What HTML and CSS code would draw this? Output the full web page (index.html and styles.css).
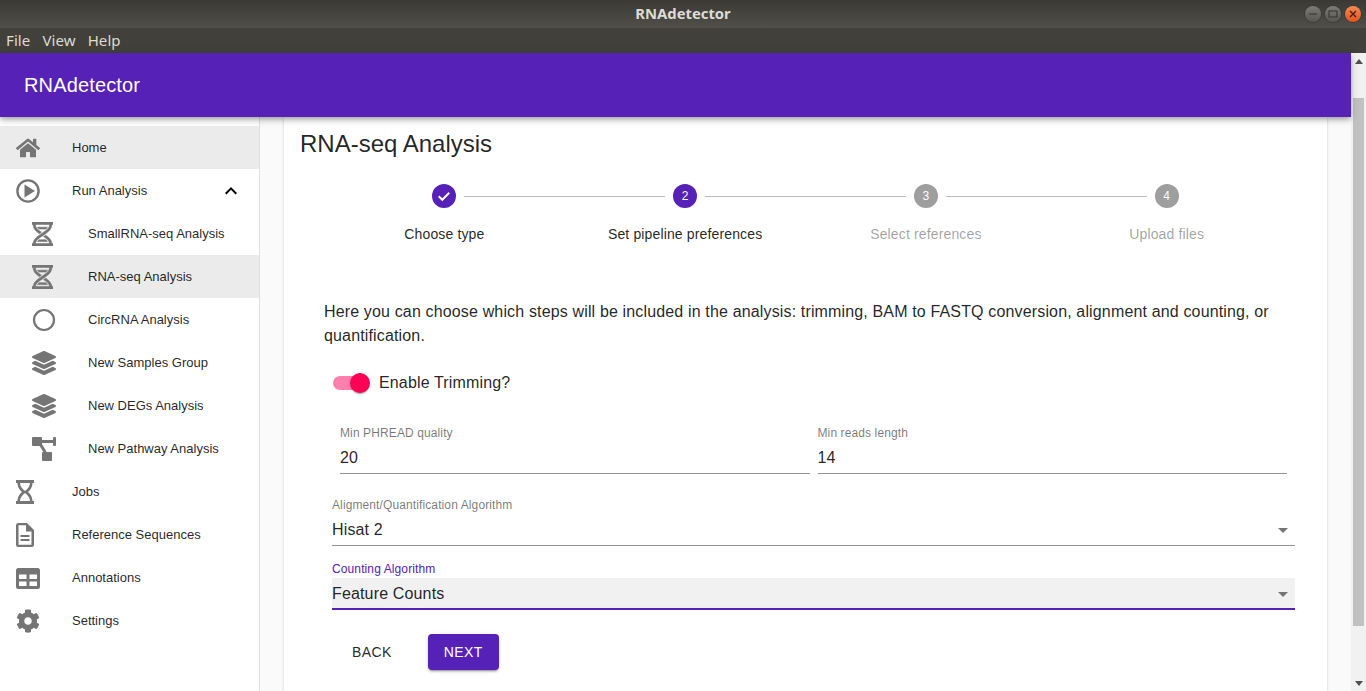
FILE: index.html
```html
<!DOCTYPE html>
<html>
<head>
<meta charset="utf-8"/>
<title>RNAdetector</title>
<link rel="stylesheet" href="styles.css">
</head>
<body>
<svg class="defs" width="0" height="0">
  <symbol id="i-home" viewBox="0 0 576 512"><path d="M280.37 148.26L96 300.11V464a16 16 0 0 0 16 16l112.06-.29a16 16 0 0 0 15.92-16V368a16 16 0 0 1 16-16h64a16 16 0 0 1 16 16v95.64a16 16 0 0 0 16 16.05L464 480a16 16 0 0 0 16-16V300L295.67 148.26a12.19 12.19 0 0 0-15.3 0zM571.6 251.47L488 182.56V44.05a12 12 0 0 0-12-12h-56a12 12 0 0 0-12 12v72.61L318.47 43a48 48 0 0 0-61 0L4.34 251.47a12 12 0 0 0-1.6 16.9l25.5 31A12 12 0 0 0 45.15 301l235.22-193.74a12.19 12.19 0 0 1 15.3 0L530.9 301a12 12 0 0 0 16.9-1.6l25.5-31a12 12 0 0 0-1.7-16.93z"/></symbol>
  <symbol id="i-play" viewBox="0 0 24 24"><circle cx="12" cy="12" r="10.6" fill="none" stroke="#757575" stroke-width="2.4"/><path d="M8.500 5.500v13L19 12z"/></symbol>
  <symbol id="i-dna" viewBox="0 0 18 24" preserveAspectRatio="none"><path d="M0 0h18v2.800H0zM0 21.200h18V24H0z"/><path transform="translate(-3 -2) scale(1 1.2)" stroke="#757575" stroke-width="0.5" d="M4 2H6V4C6 5.44 6.68 6.61 7.88 7.78C8.74 8.61 9.89 9.41 11.09 10.2L9.26 11.39C8.27 10.72 7.31 10 6.5 9.21C5.07 7.82 4 6.1 4 4V2M18 2H20V4C20 6.1 18.93 7.82 17.5 9.21C16.09 10.59 14.29 11.73 12.54 12.84C10.79 13.96 9.09 15.05 7.88 16.22C6.68 17.39 6 18.56 6 20V22H4V20C4 17.9 5.07 16.18 6.5 14.79C7.91 13.41 9.71 12.27 11.46 11.16C13.21 10.04 14.91 8.95 16.12 7.78C17.32 6.61 18 5.44 18 4V2M14.74 12.61C15.73 13.28 16.69 14 17.5 14.79C18.93 16.18 20 17.9 20 20V22H18V20C18 18.56 17.32 17.39 16.12 16.22C15.26 15.39 14.11 14.59 12.91 13.8L14.74 12.61M7.68 6H16.32C16.08 6.34 15.8 6.69 15.42 7.06L14.91 7.5H9.07L8.58 7.06C8.2 6.69 7.92 6.34 7.68 6M9.07 16.5H14.93L15.42 16.94C15.8 17.31 16.08 17.66 16.32 18H7.68C7.92 17.66 8.2 17.31 8.58 16.94L9.07 16.5Z"/></symbol>
  <symbol id="i-circle" viewBox="0 0 24 24"><circle cx="12" cy="12" r="10" fill="none" stroke="#757575" stroke-width="2.200"/></symbol>
  <symbol id="i-layers" viewBox="0 0 512 512"><path d="M12.41 148.02l232.94 105.67c6.8 3.09 14.49 3.09 21.29 0l232.94-105.67c16.55-7.51 16.55-32.52 0-40.03L266.65 2.31a25.607 25.607 0 0 0-21.29 0L12.41 107.98c-16.55 7.51-16.55 32.53 0 40.04zm487.18 88.28l-58.09-26.33-161.64 73.27c-7.56 3.43-15.59 5.17-23.86 5.17s-16.29-1.74-23.86-5.17L70.51 209.97l-58.1 26.33c-16.55 7.5-16.55 32.5 0 40l232.94 105.59c6.8 3.08 14.49 3.08 21.29 0L499.59 276.3c16.55-7.5 16.55-32.5 0-40zm0 127.8l-57.87-26.23-161.86 73.37c-7.56 3.43-15.59 5.17-23.86 5.17s-16.29-1.74-23.86-5.17L70.29 337.87 12.41 364.1c-16.55 7.5-16.55 32.5 0 40l232.94 105.59c6.8 3.08 14.49 3.08 21.29 0L499.59 404.1c16.55-7.5 16.55-32.5 0-40z"/></symbol>
  <symbol id="i-pathway" viewBox="0 0 24 24"><rect x="0" y="0" width="10" height="9" rx="1"/><rect x="21" y="0" width="3" height="9" rx="1"/><rect x="10" y="15" width="10" height="9" rx="1"/><path d="M9 3h12v3H9zM7 8l2.500-1.500 5 8-2.500 1.500z"/></symbol>
  <symbol id="i-hourglass" viewBox="0 0 18 24" preserveAspectRatio="xMinYMid meet"><path fill-rule="evenodd" d="M0 0h18v3h-1.500c0 4.500-2.500 7-4.500 9 2 2 4.500 4.500 4.500 9H18v3H0v-3h1.500c0-4.500 2.500-7 4.500-9-2-2-4.500-4.500-4.500-9H0zm4 3c0 3.500 2.500 6 5 8 2.500-2 5-4.500 5-8zM9 13c-2.500 2-5 4.500-5 8h10c0-3.500-2.500-6-5-8z"/></symbol>
  <symbol id="i-file" viewBox="0 0 18 24" preserveAspectRatio="xMinYMid meet"><path d="M2.500 0H11l7 7v14.500a2.500 2.500 0 0 1-2.500 2.500h-13A2.500 2.500 0 0 1 0 21.500v-19A2.500 2.500 0 0 1 2.500 0zm0 2.200v19.600h13V8.500H10V2.200zM4.500 12h9v2h-9zM4.500 16h9v2h-9z" fill-rule="evenodd"/></symbol>
  <symbol id="i-table" viewBox="0 0 24 24"><path d="M2.500 2h19A2.500 2.500 0 0 1 24 4.500v16a2.500 2.500 0 0 1-2.500 2.500h-19A2.500 2.500 0 0 1 0 20.500v-16A2.500 2.500 0 0 1 2.500 2zM3 8.500V13h7.500V8.500zm10.500 0V13H21V8.500zM3 15.500V20h7.500v-4.500zm10.500 0V20H21v-4.500z" fill-rule="evenodd"/></symbol>
  <symbol id="i-cog" viewBox="0 0 512 512"><path d="M487.4 315.700l-42.600-24.600c4.300-23.200 4.300-47 0-70.200l42.600-24.600c4.900-2.800 7.100-8.600 5.500-14-11.100-35.600-30-67.800-54.700-94.600-3.800-4.100-10-5.100-14.800-2.300L380.800 110c-17.900-15.400-38.500-27.300-60.800-35.100V25.800c0-5.600-3.900-10.500-9.400-11.700-36.700-8.200-74.300-7.800-109.200 0-5.500 1.200-9.400 6.100-9.400 11.700V75c-22.200 7.900-42.800 19.800-60.800 35.100L88.700 85.500c-4.900-2.800-11-1.900-14.800 2.300-24.700 26.700-43.600 58.900-54.700 94.600-1.700 5.400.6 11.200 5.500 14L67.300 221c-4.300 23.200-4.300 47 0 70.200l-42.600 24.600c-4.900 2.800-7.100 8.600-5.500 14 11.100 35.600 30 67.800 54.700 94.600 3.800 4.100 10 5.100 14.800 2.300l42.600-24.600c17.900 15.400 38.500 27.300 60.800 35.100v49.200c0 5.600 3.900 10.500 9.400 11.700 36.700 8.200 74.300 7.800 109.200 0 5.500-1.200 9.400-6.100 9.400-11.700v-49.200c22.200-7.900 42.800-19.800 60.800-35.100l42.600 24.600c4.900 2.800 11 1.900 14.800-2.300 24.700-26.700 43.600-58.900 54.700-94.600 1.500-5.500-.7-11.300-5.600-14.100zM256 336c-44.100 0-80-35.900-80-80s35.900-80 80-80 80 35.900 80 80-35.900 80-80 80z"/></symbol>
  <symbol id="i-drop" viewBox="0 0 24 24"><path d="M7 10l5 5 5-5z"/></symbol>
</svg>

<div class="titlebar">
  <div></div>
  <div class="titlebar-name">RNAdetector</div>
  <div class="winbtns">
    <span class="winbtn"><svg viewBox="0 0 16 16" width="16" height="16"><path d="M4 7.500h8v1.200H4z" fill="#3c3b37"/></svg></span>
    <span class="winbtn"><svg viewBox="0 0 16 16" width="16" height="16"><rect x="4" y="5" width="8" height="6" fill="none" stroke="#3c3b37" stroke-width="1.200"/></svg></span>
    <span class="winbtn winbtn-close"><svg viewBox="0 0 16 16" width="16" height="16"><path d="M5 5l6 6M11 5l-6 6" fill="none" stroke="#41200f" stroke-width="1.400"/></svg></span>
  </div>
</div>
<div class="menubar"><span>File</span><span>View</span><span>Help</span></div>

<div class="window">
  <div class="app">
    <header class="appbar">RNAdetector</header>
    <div class="app-body">
      <nav class="sidebar">
        <a class="nav-item selected"><svg class="icon"><use href="#i-home"/></svg>Home</a>
        <a class="nav-item"><svg class="icon"><use href="#i-play"/></svg>Run Analysis
          <svg class="chevron" viewBox="0 0 24 24" width="24" height="24"><path d="M12 8l-6 6 1.410 1.410L12 10.830l4.590 4.580L18 14z"/></svg></a>
        <a class="nav-item sub"><svg class="icon icon-dna"><use href="#i-dna"/></svg>SmallRNA-seq Analysis</a>
        <a class="nav-item sub selected"><svg class="icon icon-dna"><use href="#i-dna"/></svg>RNA-seq Analysis</a>
        <a class="nav-item sub"><svg class="icon"><use href="#i-circle"/></svg>CircRNA Analysis</a>
        <a class="nav-item sub"><svg class="icon"><use href="#i-layers"/></svg>New Samples Group</a>
        <a class="nav-item sub"><svg class="icon"><use href="#i-layers"/></svg>New DEGs Analysis</a>
        <a class="nav-item sub"><svg class="icon"><use href="#i-pathway"/></svg>New Pathway Analysis</a>
        <a class="nav-item"><svg class="icon"><use href="#i-hourglass"/></svg>Jobs</a>
        <a class="nav-item"><svg class="icon"><use href="#i-file"/></svg>Reference Sequences</a>
        <a class="nav-item"><svg class="icon"><use href="#i-table"/></svg>Annotations</a>
        <a class="nav-item"><svg class="icon"><use href="#i-cog"/></svg>Settings</a>
      </nav>
      <main class="main">
        <section class="card">
          <h1 class="card-title">RNA-seq Analysis</h1>
          <div class="stepper">
            <div class="step">
              <span class="step-dot active"><svg viewBox="0 0 24 24" width="14" height="14"><path d="M3 12.500l6 6L21 6.500" fill="none" stroke="#fff" stroke-width="3.400"/></svg></span>
              <span class="step-label">Choose type</span>
            </div>
            <div class="step">
              <span class="step-dot active">2</span>
              <span class="step-label">Set pipeline preferences</span>
            </div>
            <div class="step">
              <span class="step-dot">3</span>
              <span class="step-label muted">Select references</span>
            </div>
            <div class="step">
              <span class="step-dot">4</span>
              <span class="step-label muted">Upload files</span>
            </div>
          </div>
          <form class="form">
            <p class="intro">Here you can choose which steps will be included in the analysis: trimming, BAM to FASTQ conversion, alignment and counting, or quantification.</p>
            <div class="switch-row">
              <span class="switch"><span class="switch-thumb"></span></span>
              <span>Enable Trimming?</span>
            </div>
            <div class="input-row">
              <div class="field"><label>Min PHREAD quality</label><div class="value">20</div></div>
              <div class="field"><label>Min reads length</label><div class="value">14</div></div>
            </div>
            <div class="field select">
              <label>Aligment/Quantification Algorithm</label>
              <div class="value">Hisat 2<svg class="drop"><use href="#i-drop"/></svg></div>
            </div>
            <div class="field select focused">
              <label>Counting Algorithm</label>
              <div class="value">Feature Counts<svg class="drop"><use href="#i-drop"/></svg></div>
            </div>
            <div class="actions">
              <button type="button" class="btn">BACK</button>
              <button type="button" class="btn primary">NEXT</button>
            </div>
          </form>
        </section>
      </main>
    </div>
  </div>
  <div class="scrollbar">
    <span class="arrow-up"></span>
    <span class="thumb"></span>
    <span class="arrow-down"></span>
  </div>
</div>
</body>
</html>
```

FILE: styles.css
```css
html, body {
  margin: 0;
  height: 691px;
  overflow: hidden;
}

body {
  display: flex;
  flex-direction: column;
  font-family: "Liberation Sans", sans-serif;
  color: rgba(0, 0, 0, 0.87);
  background: #fff;
}

.defs {
  position: absolute;
}

/* window chrome */
.titlebar {
  height: 28px;
  flex: none;
  display: grid;
  grid-template-columns: 1fr auto 1fr;
  align-items: center;
  background: linear-gradient(#3a3934, #504f49);
  color: #dfdbd2;
}

.titlebar-name {
  font-family: "Noto Sans", sans-serif;
  font-weight: 700;
  font-size: 14.8px;
  line-height: 26px;
  margin-top: -2px;
}

.winbtns {
  display: flex;
  justify-content: flex-end;
  gap: 4px;
  padding-right: 5px;
}

.winbtn {
  width: 16px;
  height: 16px;
  border-radius: 50%;
  background: linear-gradient(#7d7c76, #565550);
  box-shadow: 0 0 0 1px #3c3b37;
}

.winbtn svg {
  display: block;
}

.winbtn-close {
  background: linear-gradient(#f58a55, #e4521b);
}

.menubar {
  height: 25px;
  flex: none;
  display: flex;
  align-items: center;
  gap: 12px;
  padding-left: 6px;
  padding-bottom: 2px;
  box-sizing: border-box;
  background: #41403b;
  color: #dfdbd2;
  font-family: "Noto Sans", sans-serif;
  font-size: 15px;
  letter-spacing: 0.1px;
}

.window {
  flex: 1;
  min-height: 0;
  display: flex;
}

.app {
  flex: 1;
  min-width: 0;
  display: flex;
  flex-direction: column;
}

.appbar {
  height: 64px;
  flex: none;
  display: flex;
  align-items: center;
  padding-left: 24px;
  position: relative;
  z-index: 2;
  background: #5521b6;
  color: #fff;
  font-size: 20px;
  letter-spacing: 0.15px;
  box-shadow: 0 2px 4px -1px rgba(0, 0, 0, 0.2), 0 4px 5px 0 rgba(0, 0, 0, 0.14), 0 1px 10px 0 rgba(0, 0, 0, 0.12);
}

.app-body {
  flex: 1;
  min-height: 0;
  display: flex;
}

/* left menu */
.sidebar {
  width: 259px;
  flex: none;
  padding-top: 9px;
  border-right: 1px solid #e0e0e0;
  font-size: 13px;
}

.nav-item {
  height: 43px;
  display: flex;
  align-items: center;
  padding-left: 16px;
  position: relative;
}

.nav-item.sub {
  padding-left: 32px;
}

.nav-item.selected {
  background: #ebebeb;
}

.icon {
  width: 24px;
  height: 24px;
  flex: none;
  margin-right: 32px;
  fill: #757575;
}

.icon-dna {
  width: 21px;
  margin-right: 35px;
}

.chevron {
  margin-left: auto;
  margin-right: 16px;
}

/* content */
.main {
  flex: 1;
  min-width: 0;
  padding: 0 24px;
  background: #fafafa;
}

.card {
  height: 600px;
  padding: 0 16px;
  background: #fff;
  box-shadow: 0 2px 1px -1px rgba(0, 0, 0, 0.2), 0 1px 1px 0 rgba(0, 0, 0, 0.14), 0 1px 3px 0 rgba(0, 0, 0, 0.12);
}

.card-title {
  margin: 0;
  padding-top: 13px;
  font-size: 24px;
  font-weight: 400;
  line-height: 28px;
}

.stepper {
  display: flex;
  margin-top: 26px;
  padding: 0 24px;
}

.step {
  flex: 1;
  display: flex;
  flex-direction: column;
  align-items: center;
  position: relative;
}

.step + .step::before {
  content: "";
  position: absolute;
  top: 12px;
  left: calc(-50% + 20px);
  right: calc(50% + 20px);
  border-top: 1px solid #bdbdbd;
}

.step-dot {
  width: 24px;
  height: 24px;
  border-radius: 50%;
  background: #9e9e9e;
  color: #fff;
  font-size: 12px;
  display: flex;
  align-items: center;
  justify-content: center;
}

.step-dot.active {
  background: #5521b6;
}

.step-label {
  margin-top: 18px;
  font-size: 14px;
  line-height: 16px;
  letter-spacing: 0.14px;
}

.step-label.muted {
  color: rgba(0, 0, 0, 0.38);
}

.form {
  padding: 0 24px;
  margin-top: 58px;
}

.intro {
  margin: 0;
  font-size: 16px;
  line-height: 24px;
  letter-spacing: 0.15px;
}

.switch-row {
  display: flex;
  align-items: center;
  height: 38px;
  margin-top: 16px;
  padding-left: 9px;
  gap: 12px;
  font-size: 16px;
  letter-spacing: 0.15px;
}

.switch {
  width: 34px;
  height: 14px;
  border-radius: 7px;
  background: #ff80ab;
  position: relative;
}

.switch-thumb {
  position: absolute;
  top: -3px;
  left: 17px;
  width: 20px;
  height: 20px;
  border-radius: 50%;
  background: #ff0057;
  box-shadow: 0 2px 1px -1px rgba(0, 0, 0, 0.2), 0 1px 1px 0 rgba(0, 0, 0, 0.14), 0 1px 3px 0 rgba(0, 0, 0, 0.12);
}

.input-row {
  display: flex;
  gap: 8px;
  margin-top: 23px;
  padding-left: 16px;
}

.input-row .field {
  flex: 1;
}

.field label {
  display: block;
  height: 16px;
  font-size: 12px;
  line-height: 16px;
  letter-spacing: 0.11px;
  color: rgba(0, 0, 0, 0.54);
}

.value {
  height: 32px;
  line-height: 34px;
  font-size: 16px;
  letter-spacing: 0.15px;
  border-bottom: 1px solid #949494;
  position: relative;
}

.select {
  width: 963px;
  margin-left: 8px;
  margin-top: 23px;
}

.select + .select {
  margin-top: 15px;
}

.drop {
  position: absolute;
  right: 0;
  top: 5px;
  width: 24px;
  height: 24px;
  fill: #757575;
}

.focused label {
  color: #5521b6;
}

.focused .value {
  height: 30px;
  margin-top: 1px;
  line-height: 31px;
  background: #f1f1f1;
  border-bottom: 2px solid #5521b6;
}

.focused .drop {
  top: 4px;
}

.actions {
  display: flex;
  gap: 20px;
  margin-top: 24px;
  margin-left: 12px;
}

.btn {
  height: 36px;
  padding: 0 16px;
  min-width: 64px;
  border: 0;
  border-radius: 4px;
  background: transparent;
  color: rgba(0, 0, 0, 0.87);
  font-family: "Liberation Sans", sans-serif;
  font-size: 14px;
  font-weight: 400;
  letter-spacing: 0.4px;
}

.btn.primary {
  background: #5521b6;
  color: #fff;
  box-shadow: 0 3px 1px -2px rgba(0, 0, 0, 0.2), 0 2px 2px 0 rgba(0, 0, 0, 0.14), 0 1px 5px 0 rgba(0, 0, 0, 0.12);
}

/* scrollbar */
.scrollbar {
  width: 15px;
  flex: none;
  display: flex;
  flex-direction: column;
  align-items: center;
  background: #f1f1f1;
  padding-top: 6px;
}

.arrow-up {
  border: 4px solid transparent;
  border-top: 0;
  border-bottom: 5px solid #505050;
}

.thumb {
  width: 11px;
  height: 528px;
  margin-top: 34px;
  background: #c1c1c1;
}

.arrow-down {
  margin-top: 55px;
  border: 4px solid transparent;
  border-bottom: 0;
  border-top: 5px solid #505050;
}
```
